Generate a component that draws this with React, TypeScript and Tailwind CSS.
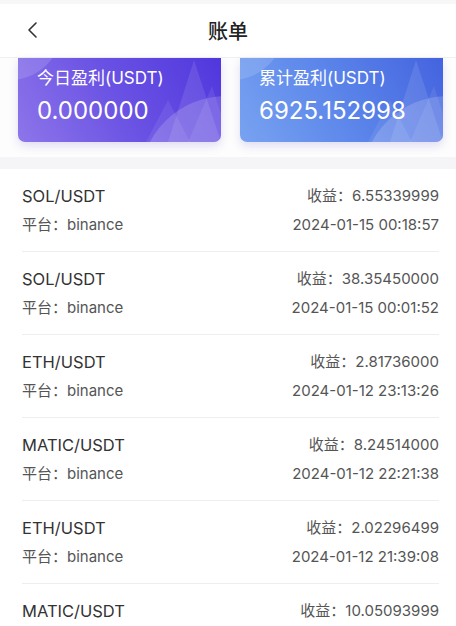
import React from 'react';

const RECORDS = [
  { pair: 'SOL/USDT', profit: '6.55339999', time: '2024-01-15 00:18:57' },
  { pair: 'SOL/USDT', profit: '38.35450000', time: '2024-01-15 00:01:52' },
  { pair: 'ETH/USDT', profit: '2.81736000', time: '2024-01-12 23:13:26' },
  { pair: 'MATIC/USDT', profit: '8.24514000', time: '2024-01-12 22:21:38' },
  { pair: 'ETH/USDT', profit: '2.02296499', time: '2024-01-12 21:39:08' },
  { pair: 'MATIC/USDT', profit: '10.05093999', time: '2024-01-12 21:02:11' },
];

const CardDecor: React.FC = () => (
  <svg className="absolute inset-0 h-full w-full" viewBox="0 0 203 84" preserveAspectRatio="none">
    <circle cx="-8" cy="-30" r="52" fill="white" fillOpacity="0.14" />
    <circle cx="208" cy="124" r="86" fill="white" fillOpacity="0.16" />
    <polygon points="150,84 176,2 203,84" fill="white" fillOpacity="0.1" />
    <polygon points="128,84 150,42 172,84" fill="white" fillOpacity="0.08" />
    <polygon points="170,84 194,28 203,56 203,84" fill="white" fillOpacity="0.08" />
  </svg>
);

const StatCard: React.FC<{ label: string; value: string; gradient: string }> = ({ label, value, gradient }) => (
  <div className={`relative h-[84px] overflow-hidden rounded-b-[7px] shadow-[0_4px_10px_rgba(90,80,200,0.18)] ${gradient}`}>
    <CardDecor />
    <div className="relative pl-[19px] pt-[7px] text-white">
      <div className="text-[17px] leading-[26px]">{label}</div>
      <div className="mt-[5px] text-[24px] leading-[30px]">{value}</div>
    </div>
  </div>
);

export default function App() {
  return (
    <div className="h-[626px] w-[456px] overflow-hidden bg-white font-['Inter','Noto_Sans_CJK_SC',sans-serif]">
      <div className="h-[4px] bg-[#f7f7f7]" />
      {/* Header */}
      <div className="relative flex h-[54px] items-center justify-center border-b border-[#f0f0f0] bg-white">
        <button className="absolute left-[22px] top-[13px] p-1 text-[#333]" aria-label="back">
          <svg width="14" height="18" viewBox="0 0 14 18" fill="none">
            <path d="M10 2 L3 9 L10 16" stroke="#333" strokeWidth="1.6" strokeLinecap="round" strokeLinejoin="round" />
          </svg>
        </button>
        <h1 className="text-[20px] font-medium text-[#222] font-['Noto_Sans_CJK_SC',sans-serif]">账单</h1>
      </div>

      {/* Cards */}
      <div className="grid grid-cols-2 gap-[19px] bg-[#fdfdfd] pl-[18px] pr-[13px] pb-[15px]">
        <StatCard label="今日盈利(USDT)" value="0.000000" gradient="bg-[linear-gradient(60deg,#8d75ea_0%,#6a52e4_50%,#5037dd_100%)]" />
        <StatCard label="累计盈利(USDT)" value="6925.152998" gradient="bg-[linear-gradient(60deg,#78a3f1_0%,#5b85ea_50%,#4463df_100%)]" />
      </div>
      <div className="h-[12px] bg-[#f5f5f7]" />

      {/* List */}
      <div className="pl-[22px] pr-[17px]">
        {RECORDS.map((r, i) => (
          <div key={i} className="border-b border-[#eeeeee] pb-[15px] pt-[15px]">
            <div className="flex items-center justify-between">
              <span className="text-[16.5px] leading-[24px] text-[#333]">{r.pair}</span>
              <span className="text-[15px] leading-[24px] text-[#555]">收益：{r.profit}</span>
            </div>
            <div className="mt-[6px] flex items-center justify-between text-[15px] leading-[22px] text-[#555]">
              <span>平台：binance</span>
              <span>{r.time}</span>
            </div>
          </div>
        ))}
      </div>
    </div>
  );
}
